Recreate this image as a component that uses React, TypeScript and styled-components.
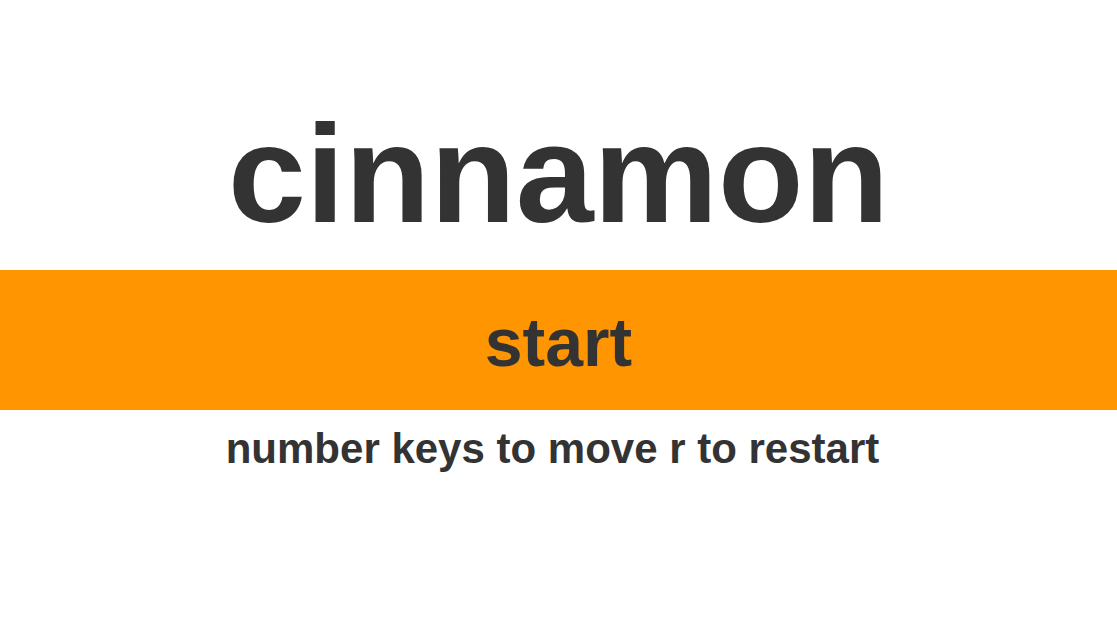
import { createGlobalStyle } from "styled-components"
import styled from "styled-components"

const GlobalStyle = createGlobalStyle`
  html, body {
    margin: 0;
    padding: 0;
    background: #ffffff;
  }
  body {
    font-family: "Liberation Sans", Arial, Helvetica, sans-serif;
    color: #333333;
  }
`

export default function App() {
  return (
    <>
      <GlobalStyle />
      <Screen>
        <Title>cinnamon</Title>
        <StartBar>
          <StartLabel>start</StartLabel>
        </StartBar>
        <Hint>number keys to move r to restart</Hint>
      </Screen>
    </>
  )
}

const Screen = styled.main`
  width: 100%;
  min-height: 626px;
  display: flex;
  flex-direction: column;
  align-items: stretch;
  padding-top: 104px;
  box-sizing: border-box;
`

const Title = styled.h1`
  margin: 0 0 26px;
  font-size: 140px;
  line-height: 140px;
  font-weight: 700;
  text-align: center;
  color: #333333;
`

const StartBar = styled.div`
  height: 140px;
  background: #ff9500;
  display: flex;
  align-items: center;
  justify-content: center;
`

const StartLabel = styled.span`
  font-size: 68px;
  line-height: 68px;
  font-weight: 700;
  color: #333333;
  padding-top: 3px;
`

const Hint = styled.p`
  margin: 18px 0 0;
  font-size: 42px;
  line-height: 42px;
  font-weight: 700;
  text-align: center;
  color: #333333;
  padding-right: 12px;
`
